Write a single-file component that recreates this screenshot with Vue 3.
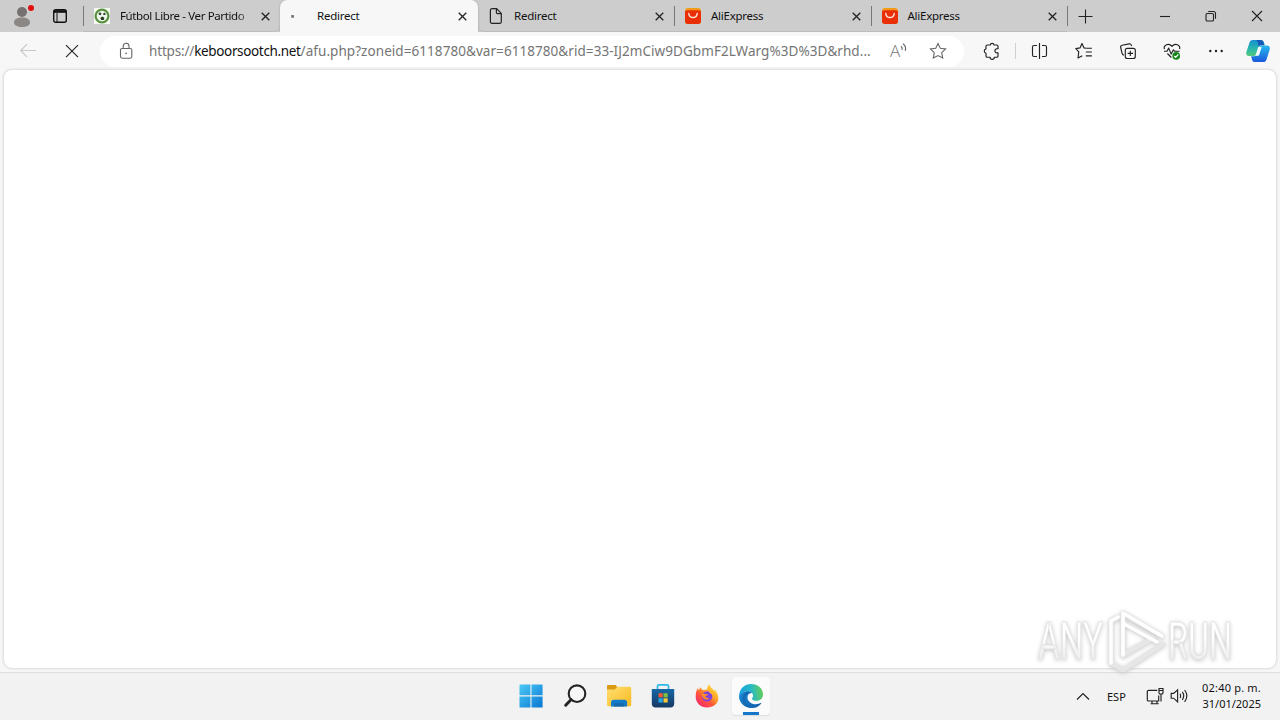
<template>
  <div class="desktop">
    <header class="tab-strip">
      <button class="profile" aria-label="Perfil">
        <svg width="24" height="24" viewBox="0 0 24 24">
          <circle cx="12" cy="8" r="5" fill="#747170" />
          <path d="M4 18.5c0-3.2 3.4-5 8-5s8 1.8 8 5c0 2.8-3.4 4.5-8 4.5s-8-1.7-8-4.5z" fill="#8b8785" />
          <circle cx="21" cy="4" r="3" fill="#e20d0d" />
        </svg>
      </button>
      <button class="workspaces" aria-label="Pestañas">
        <svg width="16" height="16" viewBox="0 0 16 16" fill="none" stroke="#111" stroke-width="1.4">
          <rect x="1.7" y="1.7" width="12.6" height="12.6" rx="2" />
          <path d="M1.7 3.5h12.6" stroke-width="2.6" />
          <path d="M5 5v9" stroke-width="1" />
        </svg>
      </button>

      <div v-for="(tab, i) in tabs" :key="i" class="tab" :class="[tab.icon, { active: tab.active }]">
        <span class="favicon">
          <svg v-if="tab.icon === 'ball'" width="16" height="16" viewBox="0 0 16 16">
            <path fill="#f4f8ef" d="M0 0h16v16H0z" />
            <circle cx="8" cy="8" r="6.4" fill="#f1f6ec" stroke="#57913f" stroke-width="2.2" />
            <path d="m8.2 8.4 2.2 1.4-.6 2.3H7.2l-.9-2.2z" fill="#273d25" />
            <circle cx="6" cy="5.8" r="1.4" fill="#31472e" />
            <circle cx="10.4" cy="5.9" r="1.2" fill="#31472e" />
          </svg>
          <svg v-else-if="tab.icon === 'loading'" width="16" height="16" viewBox="0 0 16 16">
            <rect x="1.2" y="15" width="2.8" height="2.8" rx=".6" transform="translate(0 -8)" fill="#777" />
          </svg>
          <svg v-else-if="tab.icon === 'page'" width="16" height="16" viewBox="0 0 16 16" fill="none" stroke="#222" stroke-width="1.2">
            <path d="M4 .7h4.6l4.7 4.7v8.2a1.6 1.6 0 0 1-1.6 1.7H4a1.6 1.6 0 0 1-1.6-1.7V2.4A1.6 1.6 0 0 1 4 .7z" />
            <path d="M8.4.9v3.5c0 .8.4 1.2 1.2 1.2h3.5" />
          </svg>
          <svg v-else width="16" height="16" viewBox="0 0 16 16">
            <rect width="16" height="16" rx="3" fill="#f39a17" />
            <path d="M0 4.5C0 3 .8 2.2 2.5 2.2h11c1.7 0 2.5.8 2.5 2.3V13a3 3 0 0 1-3 3H3a3 3 0 0 1-3-3z" fill="#ea2e08" />
            <path d="M3.8 5.5c.6 5.4 7.8 5.4 8.4 0" fill="none" stroke="#ffe3d7" stroke-width="1.5" stroke-linecap="round" />
          </svg>
        </span>
        <span class="tab-title">{{ tab.title }}</span>
        <svg class="close" width="9" height="9" viewBox="0 0 9 9"><path d="m.7.7 7.6 7.6m0-7.6L.7 8.3" stroke="#222" stroke-width="1.3" /></svg>
      </div>

      <button class="new-tab" aria-label="Nueva pestaña">
        <svg width="15" height="15" viewBox="0 0 15 15"><path d="M7.5.5v14M.5 7.5h14" stroke="#222" stroke-width="1.1" /></svg>
      </button>
      <div class="window-buttons">
        <svg viewBox="0 0 46 32"><path d="M18 16.5h10" /></svg>
        <svg viewBox="0 0 46 32"><rect x="18" y="13.5" width="7.5" height="7.5" rx="1.3" /><path d="M20.2 11.5h5.3a2 2 0 0 1 2 2v5.2" /></svg>
        <svg viewBox="0 0 46 32"><path d="m18 11 10 10m0-10L18 21" /></svg>
      </div>
    </header>

    <nav class="toolbar">
      <div class="nav-cell back">
        <svg class="icon" viewBox="0 0 20 20"><path d="M18 9.5H2.7m6.3-6.3L2.7 9.5 9 15.8" /></svg>
      </div>
      <div class="nav-cell">
        <svg class="icon" viewBox="0 0 20 20"><path d="m4 4.2 12 11.9M16 4.2 4 16.1" /></svg>
      </div>
      <div class="address">
        <svg class="lock" width="16" height="18" viewBox="0 0 16 18">
          <rect x="2.5" y="6.5" width="11.3" height="9.7" rx="1.6" />
          <path d="M5.2 6.5V4.2a2.9 2.9 0 0 1 5.8 0v2.3" />
          <circle cx="8.1" cy="11.4" r=".8" fill="#555" stroke="none" />
        </svg>
        <div class="url"><span class="scheme">https://</span><span class="host">keboorsootch.net</span><span class="path">/afu.php?zoneid=6118780&amp;var=6118780&amp;rid=33-IJ2mCiw9DGbmF2LWarg%3D%3D&amp;rhd...</span></div>
        <svg class="read" width="18" height="18" viewBox="0 0 18 18">
          <text x="0" y="15" font-size="17">A</text>
          <path d="M11 4.2c1.1.9 1.5 2.2 1 3.8M13 1.8c2.3 1.7 3.1 4.2 2.2 7" />
        </svg>
        <svg class="star" width="18" height="18" viewBox="0 0 18 18">
          <path d="m9 1.5 2.3 4.8 5.3.7-3.9 3.7 1 5.3L9 13.5 4.3 16l1-5.3L1.4 7l5.3-.7z" />
        </svg>
      </div>
      <div class="nav-cell puzzle">
        <svg class="icon" viewBox="0 0 20 20"><path d="M5.2 4h3a2 2 0 0 1 3.9 0h2.6c.8 0 1.3.5 1.3 1.3v2.4h-1a2.1 2.1 0 0 0 0 4.2h1v3c0 .8-.5 1.3-1.3 1.3h-2.4a2.1 2.1 0 0 1-4.2 0H5.3c-.8 0-1.3-.5-1.3-1.3v-2.7a2.2 2.2 0 0 1 0-4.3V5.3C4 4.5 4.4 4 5.2 4z" /></svg>
      </div>
      <i class="separator"></i>
      <div class="tools">
        <div class="nav-cell">
          <svg class="icon" viewBox="0 0 20 20"><path d="M7 4.5H4c-1 0-1.5.5-1.5 1.5v8c0 1 .5 1.5 1.5 1.5h3M12 4.5h3c1 0 1.5.5 1.5 1.5v8c0 1-.5 1.5-1.5 1.5h-3M9.5 2v16" /></svg>
        </div>
        <div class="nav-cell">
          <svg class="icon" viewBox="0 0 20 20"><path d="M12.1 7.2h5.8M11.8 11h6.1M11.8 14.8h6.1M12 7.2l-2-.3-2-4.3L6 6.9l-4.2.7 3 3.2L4 17l4.3-2.3" /></svg>
        </div>
        <div class="nav-cell">
          <svg class="icon" viewBox="0 0 20 20">
            <rect x="7.3" y="7.3" width="10" height="10.2" rx="2" />
            <path d="M12.3 9.7v5.4m-2.7-2.7H15M6 14.2c-1.2-.2-1.8-.9-2-2L2.7 6.5C2.4 5.3 3 4.5 4.2 4.2l7-1.3c1.2-.2 2 .3 2.2 1.5l.2.8" />
          </svg>
        </div>
        <div class="nav-cell">
          <svg class="icon" viewBox="0 0 20 20">
            <path d="M2.4 8.2C1.2 4.4 6.6 1.2 10 5.4c3.3-4.2 8.7-1 7.6 2.8M2 10.2h3l1.7-3.1 2.5 6 2.2-4.3 1 1.4h5.2M5.4 12.5l4 4" />
            <circle cx="14.2" cy="14.9" r="3.8" fill="#15871a" stroke="none" />
            <path d="m12.2 14.8 1.4 1.5 2.7-2.8" stroke="#fff" />
          </svg>
        </div>
        <div class="nav-cell">
          <svg class="icon" viewBox="0 0 20 20"><g fill="#222" stroke="none"><circle cx="4.3" cy="10" r="1.2" /><circle cx="10" cy="10" r="1.2" /><circle cx="15.7" cy="10" r="1.2" /></g></svg>
        </div>
        <div class="nav-cell copilot">
          <svg width="24" height="24" viewBox="0 0 24 24">
            <defs>
              <linearGradient id="cpA" x1="0" y1="0" x2="0" y2="1"><stop stop-color="#168fd2" /><stop offset=".55" stop-color="#29b8ae" /><stop offset="1" stop-color="#55c879" /></linearGradient>
              <linearGradient id="cpB" x1="0" y1="0" x2="0" y2="1"><stop stop-color="#26b8ee" /><stop offset="1" stop-color="#1a59dd" /></linearGradient>
            </defs>
            <path d="M7 1h8c1.8 0 2.5 1 3 2.6l.8 2.7h-3c-1.7 0-2.5.8-3 2.4l-2 6c-.5 1.5-1.4 2.3-3 2.3H3C.6 17-.2 15.2.4 13L3.5 3.6C4 2 5 1 7 1z" fill="url(#cpA)" />
            <path d="M14 1c2 0 3 1 3.5 2.6l.8 2.7h-3c-1.3 0-2 .4-2.5 1.2L11.6 3C11.2 1.8 10.6 1 9.5 1z" fill="#1759b9" />
            <path d="M17 23H9c-1.7 0-2.6-1-3-2.6l-.9-3.2h3c1.6 0 2.5-.8 3-2.4l2-6c.5-1.6 1.4-2.4 3-2.4H21c2.3 0 3.3 1.7 2.7 4l-3.2 10C20 22 19 23 17 23z" fill="url(#cpB)" />
            <path d="M12.2 8h3.5l-2.3 7.2c-.3 1-.8 1.6-1.8 1.6H8.3c1.1-.3 1.5-1 1.9-2.2z" fill="#f4faff" />
          </svg>
        </div>
      </div>
    </nav>

    <main class="page"></main>

    <footer class="taskbar">
      <div class="apps">
        <div class="app">
          <svg width="24" height="24" viewBox="0 0 24 24">
            <defs><linearGradient id="win" x1="0" y1="0" x2="1" y2="1"><stop stop-color="#4cc9f5" /><stop offset="1" stop-color="#0878d3" /></linearGradient></defs>
            <path d="M1 .5h10.4v10.8H.5V1a.5.5 0 0 1 .5-.5zm11.5 0h10.6a.5.5 0 0 1 .5.5v10.3H12.5zM.5 12.4h10.9v11.1H1a.5.5 0 0 1-.5-.5zm12 0h11.1V23a.5.5 0 0 1-.5.5H12.5z" fill="url(#win)" />
          </svg>
        </div>
        <div class="app">
          <svg width="24" height="24" viewBox="0 0 24 24" fill="none" stroke="#242424">
            <circle cx="14" cy="9.7" r="8.3" stroke-width="2.1" fill="#f6f6f6" /><path d="m8 15.7-5.3 5.5" stroke-width="3" stroke-linecap="round" />
          </svg>
        </div>
        <div class="app">
          <svg width="26" height="24" viewBox="0 0 26 24">
            <defs><linearGradient id="fold" x1="0" y1="0" x2="1" y2="1"><stop stop-color="#ffdf72" /><stop offset="1" stop-color="#f8b91f" /></linearGradient></defs>
            <path d="M1 2.2C1 1.5 1.5 1 2.2 1h6.3c1 0 1.5.3 2 1l.8 1.2L9.5 6H1z" fill="#d99b14" />
            <path d="M1 5.6h7.8l2.5-2.8h12.3c1 0 1.6.6 1.6 1.6v16.4c0 1-.6 1.5-1.6 1.5H2.5c-1 0-1.5-.6-1.5-1.5z" fill="url(#fold)" />
            <path d="M5 22.5v-4.2c0-1.6 1-2.6 2.6-2.6h10.8c1.7 0 2.7 1 2.7 2.6v4.2z" fill="#137bc9" />
            <path d="M8 19.2h10.2v3.3H8z" fill="#1768a8" />
          </svg>
        </div>
        <div class="app">
          <svg width="24" height="24" viewBox="0 0 24 24">
            <defs><linearGradient id="store" x1="0" y1="0" x2="0" y2="1"><stop stop-color="#1668a5" /><stop offset="1" stop-color="#183864" /></linearGradient></defs>
            <path d="M6.5 6V2.3c0-.9.5-1.4 1.4-1.4h8.2c.9 0 1.4.5 1.4 1.4V6" fill="none" stroke="#2cb8e9" stroke-width="1.7" />
            <path d="M.8 5h22.4v14.8c0 2.3-1.4 3.7-3.7 3.7h-15C2.2 23.5.8 22.1.8 19.8z" fill="url(#store)" />
            <path d="M7.5 9.2h4.2v4.2H7.5z" fill="#f15932" /><path d="M12.5 9.2h4.2v4.2h-4.2z" fill="#7fc13d" />
            <path d="M7.5 14.3h4.2v4.2H7.5z" fill="#25a9e8" /><path d="M12.5 14.3h4.2v4.2h-4.2z" fill="#fbc735" />
          </svg>
        </div>
        <div class="app">
          <svg width="24" height="24" viewBox="0 0 24 24">
            <defs>
              <linearGradient id="fox" x1="1" y1="0" x2=".2" y2="1"><stop stop-color="#fff34c" /><stop offset=".4" stop-color="#ffad28" /><stop offset=".68" stop-color="#ff543b" /><stop offset="1" stop-color="#f32873" /></linearGradient>
            </defs>
            <path d="M2.9 4.1c.2 1 .6 1.6 1 2C4.8 4.9 5 3.8 5.3 3c.7 1.5 1.5 2.4 2.7 3.2 1.5-.6 3-.8 4-.5.1-2.4 1-4.2 2.7-5.5 0 2.2 1.3 3.3 3.1 5 .6.5 1.3 1.2 1.7 2V5.5c2.6 2.8 4 5.7 3.8 9C23 19.8 18.3 23.5 12 23.5S.7 18.8.7 13c0-3.3.5-6.5 2.2-8.9z" fill="url(#fox)" />
            <circle cx="12.1" cy="12.4" r="5.2" fill="#8142dc" />
            <path d="M6.4 10.1c1.2-.8 2.7-.6 4 .2.9-.4 2-.2 2.8.2-.8.8-1.5 1.4-2.8 1.5.3 1.7 2.2 2.8 4.4 2-1.4 2.4-5.6 2.3-7-.4" fill="#ff8a28" />
            <path d="M12 5.8c3.3.4 5.4 2.4 6 5.2-1-1.2-2-1.6-3-1.6-.4-1.5-1.4-2.7-3-3.6z" fill="#ffb632" />
          </svg>
        </div>
        <div class="app current">
          <svg width="26" height="26" viewBox="0 0 26 26">
            <defs>
              <linearGradient id="edA" x1="0" y1=".3" x2="1" y2=".2"><stop stop-color="#159ee0" /><stop offset=".5" stop-color="#28b9c6" /><stop offset="1" stop-color="#69cf4e" /></linearGradient>
              <linearGradient id="edB" x1="0" y1="0" x2="1" y2="1"><stop stop-color="#198ed7" /><stop offset="1" stop-color="#115aa9" /></linearGradient>
            </defs>
            <path d="M1 13C1.4 5.8 6.4 1 13.1 1 20 1 25 5.6 25 11.5c0 3.8-2.7 6.3-6.3 6.3-2.9 0-4.7-1-4.7-2.1 0-.8 1.1-1.4 1.1-3 0-2.5-2.5-4.5-6-4.5C5.6 8.2 2.5 10 1 13z" fill="url(#edA)" />
            <path d="M1 13c1.4-3.1 4.4-4.8 8.1-4.8 2.1 0 3.7.7 4.8 1.8-2.7-.2-4.4 1.8-4.4 4.4 0 3.9 3.9 6.8 8.3 6.8 2 0 3.6-.5 4.7-1.1.5-.3.9.2.6.7A11.7 11.7 0 0 1 13.3 25C6.5 25 1 19.9 1 13z" fill="url(#edB)" />
            <path d="M9.2 8.2c2.1 0 3.7.7 4.7 1.8-4.5-.6-7.7 3.2-6.8 7.4.7 3.5 3.7 6.3 7.5 7.2C9.2 25.3 4.8 21.2 4.6 16c-.1-3.7 1.7-6.5 4.6-7.8z" fill="#1669b5" />
          </svg>
        </div>
      </div>
      <div class="tray">
        <svg class="chevron" width="14" height="9" viewBox="0 0 14 9"><path d="m1 7.5 6-6 6 6" /></svg>
        <span class="language">ESP</span>
        <svg class="network" width="18" height="18" viewBox="0 0 18 18">
          <path d="M11.3 3.3H2.7c-.8 0-1.4.5-1.4 1.3v8.1c0 .8.6 1.3 1.4 1.3h10V8.5M6 14v2.5m5-2.5v2.5m-6.3.2h8M13 1.5h4v4.2c0 .8-.5 1.3-1.3 1.3h-1.4c-.8 0-1.3-.5-1.3-1.3zM15 7v7.5M13.5 3.5h3" />
        </svg>
        <svg class="volume" width="18" height="16" viewBox="0 0 18 16">
          <path d="M1.2 5.4v4.8h2.5L7.6 14V1.8L3.7 5.4zM10 5.8c.8 1.3.8 2.9 0 4.2M12.3 3.9c1.8 2.5 1.8 5.4 0 8M14.6 2c2.8 3.6 2.8 8.1 0 11.8" />
        </svg>
        <div class="clock"><span>02:40 p. m.</span><span>31/01/2025</span></div>
      </div>
    </footer>

    <svg class="watermark" width="240" height="90" viewBox="0 0 240 90">
      <defs>
        <linearGradient id="mark" x1="0" y1="0" x2="0" y2="1">
          <stop offset=".45" stop-color="#fff" />
          <stop offset=".75" stop-color="#efefef" />
        </linearGradient>
      </defs>
      <text x="8" y="59" textLength="65" lengthAdjust="spacingAndGlyphs">ANY</text>
      <text x="138" y="59" textLength="64" lengthAdjust="spacingAndGlyphs">RUN</text>
      <g class="play">
        <path d="M88 17l-7 4v42l12 7 40-26" />
        <path d="M93 55V13l39 23" />
        <path d="M93 55l30-17-30-16" />
      </g>
      <g class="play light">
        <path d="M88 17l-7 4v42" />
        <path d="M93 55V13l39 23" />
        <path d="M94 24l33 18" />
      </g>
    </svg>
  </div>
</template>

<script setup>
const tabs = [
  { title: 'Fútbol Libre - Ver Partido', icon: 'ball' },
  { title: 'Redirect', icon: 'loading', active: true },
  { title: 'Redirect', icon: 'page' },
  { title: 'AliExpress', icon: 'ali' },
  { title: 'AliExpress', icon: 'ali' }
]
</script>

<style>
body {
  overflow: hidden;
}
</style>

<style scoped>
.desktop {
  position: relative;
  display: flex;
  flex-direction: column;
  width: 1280px;
  height: 720px;
  background: #f7f7f7;
  color: #111;
  font-family: 'Noto Sans', 'Open Sans', sans-serif;
}

* {
  box-sizing: border-box;
}

svg {
  display: block;
  flex: none;
}

button {
  display: grid;
  place-items: center;
  padding: 0;
  border: 0;
  background: none;
}

/* 标签栏 */
.tab-strip {
  display: flex;
  flex: none;
  height: 32px;
  background: #cdcdcd;
}

.profile {
  width: 44px;
}

.workspaces {
  width: 32px;
}

.tab {
  display: flex;
  align-items: center;
  width: 196px;
  padding: 0 10px;
  box-shadow: inset 0 -1px #bdbdbd;
}

.tab.ball {
  width: 197px;
  margin-left: 7px;
  padding-left: 11px;
  border-radius: 0 0 6px 0;
}

.tab.page {
  border-radius: 0 0 0 6px;
}

.tab.ali {
  width: 196.5px;
  padding-left: 11px;
}

.tab.ball,
.tab.ali,
.new-tab {
  background: linear-gradient(#777, #777) 0 6px / 1px 20px no-repeat;
}

.tab.active {
  width: 198px;
  padding-right: 11px;
  border-radius: 7px 7px 0 0;
  background: #f7f7f7;
  box-shadow: 0 0 2px #999;
  clip-path: inset(0 -3px 0 -3px);
}

.favicon {
  width: 16px;
  margin-right: 10px;
}

.active .favicon {
  margin-right: 11px;
}

.tab-title {
  flex: 1;
  font-size: 11.5px;
  line-height: 18px;
  letter-spacing: -0.25px;
  white-space: nowrap;
}

.ball .tab-title {
  letter-spacing: -0.38px;
  mask-image: linear-gradient(90deg, #000 88%, rgba(0, 0, 0, 0.3));
}

.close {
  margin-left: 9px;
}

.new-tab {
  width: 37px;
}

.window-buttons {
  display: flex;
  margin-left: auto;
}

.window-buttons svg {
  width: 46px;
  height: 32px;
  fill: none;
  stroke: #222;
  stroke-width: 1.1;
}

/* 工具栏 */
.toolbar {
  display: flex;
  flex: none;
  align-items: center;
  height: 38px;
  padding-left: 6px;
}

.nav-cell {
  display: grid;
  flex: none;
  place-items: center;
  width: 44px;
  height: 36px;
}

.icon {
  width: 20px;
  height: 20px;
  fill: none;
  stroke: #222;
  stroke-width: 1.15;
  stroke-linejoin: round;
}

.back .icon {
  stroke: #c8c8c8;
}

.address {
  display: flex;
  align-items: center;
  width: 864px;
  height: 31px;
  margin-left: 6px;
  padding: 0 17px 0 18px;
  border-radius: 16px;
  background: #fff;
}

.lock,
.read,
.star {
  fill: none;
  stroke: #666;
  stroke-width: 1.1;
}

.url {
  display: flex;
  width: 725px;
  margin-left: 15px;
  color: #757575;
  font-size: 13.5px;
  line-height: 20px;
  white-space: nowrap;
}

.scheme {
  letter-spacing: -0.17px;
}

.host {
  color: #111;
  letter-spacing: -0.35px;
}

.path {
  letter-spacing: 0.06px;
}

.read {
  margin-left: 16px;
}

.read text {
  fill: #777;
  stroke: none;
  font-family: 'Open Sans', sans-serif;
  font-weight: 300;
}

.star {
  margin-left: auto;
}

.puzzle {
  margin-left: 6px;
}

.separator {
  width: 1px;
  height: 16px;
  margin-left: 1px;
  background: #d0d0d0;
}

.tools {
  display: flex;
  margin-left: 2px;
}

.copilot {
  width: 40px;
}

main.page {
  flex: none;
  height: 598px;
  margin: 0 4px;
  border-radius: 8px;
  background: #fff;
  box-shadow: 0 0 3px #bbb;
}

/* 任务栏 */
.taskbar {
  display: flex;
  flex: none;
  height: 48px;
  margin-top: 4px;
  padding-left: 509px;
  border-top: 1px solid #dedede;
  background: #f2f2f2;
}

.apps {
  display: flex;
}

.app {
  display: grid;
  place-items: center;
  width: 44px;
  height: 46px;
}

.current {
  width: 38px;
  height: 38px;
  margin: 4px 0 0 3px;
  border-radius: 4px;
  background: linear-gradient(#1678cb, #1678cb) 50% 100% / 16px 3px no-repeat, #fbfbfb;
  box-shadow: 0 1px 1px #ddd;
}

.tray {
  display: flex;
  align-items: center;
  width: 204px;
  height: 46px;
  margin-left: auto;
}

.tray svg {
  fill: none;
  stroke: #222;
  stroke-width: 1.15;
}

.language {
  margin-left: 17px;
  font-size: 11px;
}

.network {
  margin-left: 20px;
}

.volume {
  margin-left: 6px;
}

.clock {
  display: flex;
  flex-direction: column;
  align-items: flex-end;
  margin: 0 19px 0 auto;
  font-size: 11px;
  line-height: 16px;
}

.clock span:first-child {
  letter-spacing: 0.2px;
}

/* 水印浮在页面和任务栏之上 */
.watermark {
  position: absolute;
  top: 600px;
  left: 1030px;
  filter: drop-shadow(0 1px 2px #c4c4c4);
}

.watermark text {
  fill: url(#mark);
  stroke: #e4e4e4;
  stroke-width: 0.8;
  font: 400 51px Roboto, sans-serif;
}

.play {
  fill: none;
  stroke: #e6e6e6;
  stroke-width: 5;
  stroke-linejoin: round;
  stroke-linecap: round;
}

.light {
  stroke: #fff;
  stroke-width: 3.5;
}
</style>
